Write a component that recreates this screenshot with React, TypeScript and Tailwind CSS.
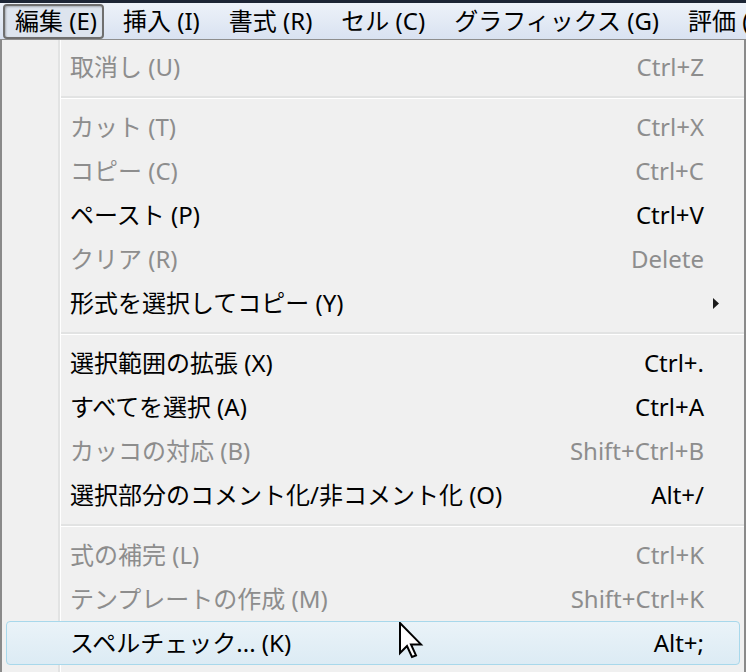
import React from 'react';

type Item = {
  label: string;
  shortcut?: string;
  disabled?: boolean;
  submenu?: boolean;
  active?: boolean;
};

type Entry = Item | 'sep';

const menuBar = ['編集 (E)', '挿入 (I)', '書式 (R)', 'セル (C)', 'グラフィックス (G)', '評価 (V)'];

const entries: Entry[] = [
  { label: '取消し (U)', shortcut: 'Ctrl+Z', disabled: true },
  'sep',
  { label: 'カット (T)', shortcut: 'Ctrl+X', disabled: true },
  { label: 'コピー (C)', shortcut: 'Ctrl+C', disabled: true },
  { label: 'ペースト (P)', shortcut: 'Ctrl+V' },
  { label: 'クリア (R)', shortcut: 'Delete', disabled: true },
  { label: '形式を選択してコピー (Y)', submenu: true },
  'sep',
  { label: '選択範囲の拡張 (X)', shortcut: 'Ctrl+.' },
  { label: 'すべてを選択 (A)', shortcut: 'Ctrl+A' },
  { label: 'カッコの対応 (B)', shortcut: 'Shift+Ctrl+B', disabled: true },
  { label: '選択部分のコメント化/非コメント化 (O)', shortcut: 'Alt+/' },
  'sep',
  { label: '式の補完 (L)', shortcut: 'Ctrl+K', disabled: true },
  { label: 'テンプレートの作成 (M)', shortcut: 'Shift+Ctrl+K', disabled: true },
  { label: 'スペルチェック... (K)', shortcut: 'Alt+;', active: true },
];

// mouse pointer resting over the highlighted item
const Pointer = () => (
  <svg width="26" height="38" viewBox="0 0 13 19" className="absolute left-[392px] top-[0px]">
    <path
      d="M0.5 0.5 L0.5 15.5 L4 12 L6.5 17.5 L8.5 16.7 L6 11.2 L11 11.2 Z"
      fill="#fff"
      stroke="#000"
      strokeWidth="1"
      strokeLinejoin="miter"
    />
  </svg>
);

const MenuRow = ({ item }: { item: Item }) => {
  const text = item.disabled ? 'text-[#8d8d8d]' : 'text-black';
  if (item.active) {
    return (
      <div className="relative mx-[4px] flex h-[44px] items-center rounded-[4px] border border-[#a8d8eb] bg-gradient-to-b from-[#eaf3f8] to-[#dcebf4] pl-[63px] pr-[35px]">
        <span className={text}>{item.label}</span>
        <span className="flex-1" />
        <span className={text}>{item.shortcut}</span>
        <Pointer />
      </div>
    );
  }
  return (
    <div className="flex h-[44px] items-center pl-[68px] pr-[40px]">
      <span className={text}>{item.label}</span>
      <span className="flex-1" />
      {item.shortcut && <span className={text}>{item.shortcut}</span>}
      {item.submenu && (
        <svg width="6" height="11" viewBox="0 0 6 11" className="mr-[-15px]">
          <path d="M0 0 L6 5.5 L0 11 Z" fill="#1a1a1a" />
        </svg>
      )}
    </div>
  );
};

export default function App() {
  return (
    <div
      className="flex h-[672px] w-[746px] flex-col overflow-hidden bg-[#f0f0f0] text-[24px] leading-none"
      style={{ fontFamily: '"Noto Sans", "Noto Sans CJK JP", sans-serif' }}
    >
      <div className="h-[3px] bg-[#1c2535]" />
      <div className="flex h-[37px] items-center gap-[29px] border-b border-[#8e8e8e] bg-gradient-to-b from-[#edf2f9] to-[#d9e2f1] px-[3px] whitespace-nowrap">
        {menuBar.map((m, i) => (
          <div
            key={m}
            className={
              i === 0
                ? 'mr-[-10px] flex h-[35px] shrink-0 items-center rounded-[4px] border-2 border-[#6f6f6f] bg-[#dde4ee] pl-[10px] pr-[5px] shadow-[inset_1px_1px_2px_rgba(0,0,0,0.25)]'
                : 'flex h-[35px] shrink-0 items-center'
            }
          >
            {m}
          </div>
        ))}
      </div>
      <div className="flex flex-1 flex-col border-l-2 border-r-2 border-[#8a8a8a] bg-[linear-gradient(to_right,#f0f0f0_56px,#e2e3e3_56px,#e2e3e3_58px,#ffffff_58px,#ffffff_59px,#f0f0f0_59px)] pt-[5px]">
        {entries.map((e, i) =>
          e === 'sep' ? (
            <div key={i} className="flex h-[16px] flex-col justify-center pl-[59px]">
              <div className="h-[2px] bg-[#e2e3e3]" />
              <div className="h-[1px] bg-white" />
            </div>
          ) : (
            <MenuRow key={i} item={e} />
          )
        )}
      </div>
    </div>
  );
}
